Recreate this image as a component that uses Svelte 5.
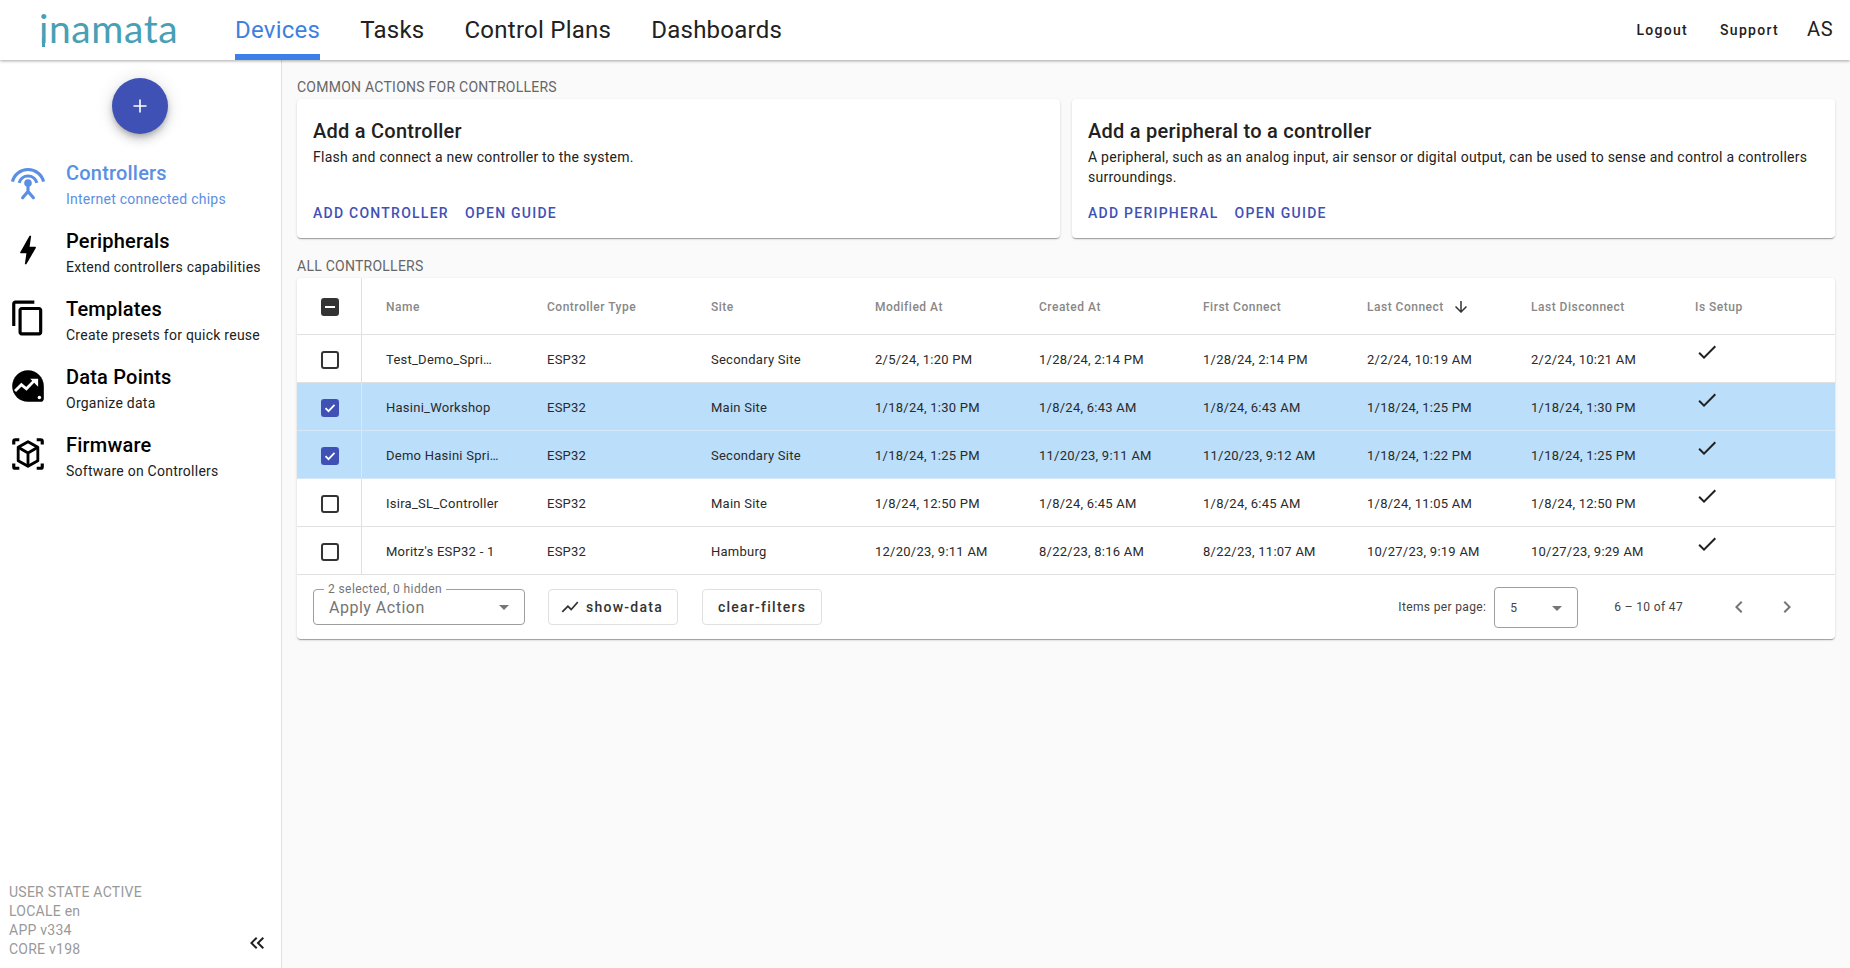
<script lang="ts">
	const tabs = ['Devices', 'Tasks', 'Control Plans', 'Dashboards'];

	const sideItems = [
		{ id: 'controllers', title: 'Controllers', sub: 'Internet connected chips', active: true },
		{ id: 'peripherals', title: 'Peripherals', sub: 'Extend controllers capabilities' },
		{ id: 'templates', title: 'Templates', sub: 'Create presets for quick reuse' },
		{ id: 'datapoints', title: 'Data Points', sub: 'Organize data' },
		{ id: 'firmware', title: 'Firmware', sub: 'Software on Controllers' }
	];

	const columns = ['Name', 'Controller Type', 'Site', 'Modified At', 'Created At', 'First Connect', 'Last Connect', 'Last Disconnect', 'Is Setup'];

	const rows = [
		{ selected: false, cells: ['Test_Demo_Spri…', 'ESP32', 'Secondary Site', '2/5/24, 1:20 PM', '1/28/24, 2:14 PM', '1/28/24, 2:14 PM', '2/2/24, 10:19 AM', '2/2/24, 10:21 AM'] },
		{ selected: true, cells: ['Hasini_Workshop', 'ESP32', 'Main Site', '1/18/24, 1:30 PM', '1/8/24, 6:43 AM', '1/8/24, 6:43 AM', '1/18/24, 1:25 PM', '1/18/24, 1:30 PM'] },
		{ selected: true, cells: ['Demo Hasini Spri…', 'ESP32', 'Secondary Site', '1/18/24, 1:25 PM', '11/20/23, 9:11 AM', '11/20/23, 9:12 AM', '1/18/24, 1:22 PM', '1/18/24, 1:25 PM'] },
		{ selected: false, cells: ['Isira_SL_Controller', 'ESP32', 'Main Site', '1/8/24, 12:50 PM', '1/8/24, 6:45 AM', '1/8/24, 6:45 AM', '1/8/24, 11:05 AM', '1/8/24, 12:50 PM'] },
		{ selected: false, cells: ["Moritz's ESP32 - 1", 'ESP32', 'Hamburg', '12/20/23, 9:11 AM', '8/22/23, 8:16 AM', '8/22/23, 11:07 AM', '10/27/23, 9:19 AM', '10/27/23, 9:29 AM'] }
	];
</script>

<div class="page">
	<header class="topbar">
		<div class="logo-wrap"><span class="logo">inamata</span></div>
		<nav class="tabs">
			{#each tabs as tab, i}
				<a class="tab" class:active={i === 0} href="#top">{tab}</a>
			{/each}
		</nav>
		<div class="top-actions">
			<span class="top-btn">Logout</span>
			<span class="top-btn">Support</span>
			<span class="avatar">AS</span>
		</div>
	</header>

	<div class="body">
		<aside class="sidebar">
			<div class="fab-wrap">
				<button class="fab" aria-label="Add">
					<svg width="16" height="16" viewBox="0 0 16 16"><path d="M8 1.5v13M1.5 8h13" stroke="#fff" stroke-width="1.6" fill="none" /></svg>
				</button>
			</div>

			<ul class="side-list">
				{#each sideItems as item}
					<li class="side-item" class:active={item.active}>
						<svg class="side-icon" width="38" height="38" viewBox="0 0 24 24" fill="currentColor">
							{#if item.id === 'controllers'}
								<g fill="none" stroke="currentColor" stroke-width="2">
									<path d="M2.200 11.800a10 9.600 0 0 1 19.600 0" />
									<path d="M6.400 12.500a5.800 5.800 0 0 1 11.200 0" />
									<path d="M12 13v5M8.600 22l3.400-4 3.400 4" stroke-linecap="round" />
								</g>
								<circle cx="12" cy="12.600" r="2.400" />
							{:else if item.id === 'peripherals'}
								<path d="M11 21h-1l1-7H7.500c-.88 0-.33-.75-.31-.78C8.480 10.940 10.420 7.540 13.010 3h1l-1 7h3.510c.4 0 .62.19.4.66C12.970 17.550 11 21 11 21z" />
							{:else if item.id === 'templates'}
								<path d="M16 1H4c-1.100 0-2 .9-2 2v14h2V3h12V1zm3 4H8c-1.100 0-2 .9-2 2v14c0 1.100.9 2 2 2h11c1.100 0 2-.9 2-2V7c0-1.100-.9-2-2-2zm0 16H8V7h11v14z" />
							{:else if item.id === 'datapoints'}
								<path d="M12 2C6.480 2 2 6.480 2 12s4.480 10 10 10h8c1.100 0 2-.9 2-2v-8c0-5.520-4.480-10-10-10z" />
								<path d="M3.800 15.200l4-4 3.200 2.600 5-5.200" fill="none" stroke="#fff" stroke-width="1.800" />
								<path d="M13.400 7.400h5v5z" fill="#fff" />
								<circle cx="19.200" cy="19.200" r="1.100" fill="#fff" />
							{:else}
								<g fill="none" stroke="currentColor" stroke-width="2" stroke-linejoin="round">
									<path d="M3 6V4a1 1 0 0 1 1-1h2.500M17.500 3H20a1 1 0 0 1 1 1v2M21 18v2a1 1 0 0 1-1 1h-2.500M6.500 21H4a1 1 0 0 1-1-1v-2" />
									<path d="M12 4.200l6.200 3.600v8.400L12 19.800l-6.200-3.600V7.800z" stroke-width="1.800" />
									<path d="M5.800 7.800L12 11.400l6.200-3.600M12 11.400v8.400" stroke-width="1.800" />
								</g>
							{/if}
						</svg>
						<div class="side-text">
							<div class="side-title">{item.title}</div>
							<div class="side-sub">{item.sub}</div>
						</div>
					</li>
				{/each}
			</ul>

			<div class="side-footer">
				<div class="versions">
					<div>USER STATE ACTIVE</div>
					<div>LOCALE en</div>
					<div>APP v334</div>
					<div>CORE v198</div>
				</div>
				<svg class="collapse" width="24" height="24" viewBox="0 0 24 24" fill="#212121">
					<path d="M17.590 18L19 16.590 14.420 12 19 7.410 17.590 6l-6 6zM11 18l1.410-1.410L7.830 12l4.580-4.590L11 6l-6 6z" />
				</svg>
			</div>
		</aside>

		<main class="content">
			<div class="section-label first">COMMON ACTIONS FOR CONTROLLERS</div>
			<div class="cards">
				<section class="card">
					<h2>Add a Controller</h2>
					<p>Flash and connect a new controller to the system.</p>
					<div class="card-actions">
						<span class="link">ADD CONTROLLER</span>
						<span class="link">OPEN GUIDE</span>
					</div>
				</section>
				<section class="card">
					<h2>Add a peripheral to a controller</h2>
					<p>A peripheral, such as an analog input, air sensor or digital output, can be used to sense and control a controllers surroundings.</p>
					<div class="card-actions">
						<span class="link">ADD PERIPHERAL</span>
						<span class="link">OPEN GUIDE</span>
					</div>
				</section>
			</div>

			<div class="section-label">ALL CONTROLLERS</div>
			<div class="table-card">
				<table>
					<thead>
						<tr>
							<th class="select-cell"><span class="box indeterminate"><i></i></span></th>
							{#each columns as col, i}
								<th class:name-cell={i === 0}>
									<span class="th-inner">
										{col}
										{#if col === 'Last Connect'}
											<svg class="sort" width="18" height="18" viewBox="0 0 24 24" fill="#333"><path d="M20 12l-1.410-1.410L13 16.170V4h-2v12.170l-5.580-5.590L4 12l8 8 8-8z" /></svg>
										{/if}
									</span>
								</th>
							{/each}
						</tr>
					</thead>
					<tbody>
						{#each rows as row}
							<tr class:selected={row.selected}>
								<td class="select-cell">
									<span class="box" class:checked={row.selected}>
										{#if row.selected}
											<svg width="14" height="14" viewBox="0 0 14 14"><path d="M2.500 7.200l3 3 6-6.400" fill="none" stroke="#fff" stroke-width="1.700" /></svg>
										{/if}
									</span>
								</td>
								{#each row.cells as cell, i}
									<td class:name-cell={i === 0}>{cell}</td>
								{/each}
								<td>
									<svg class="setup-check" width="24" height="24" viewBox="0 0 24 24" fill="#212121"><path d="M9 16.170L4.830 12l-1.420 1.410L9 19 21 7l-1.410-1.410z" /></svg>
								</td>
							</tr>
						{/each}
					</tbody>
				</table>

				<div class="table-footer">
					<div class="action-select">
						<span class="float-label">2 selected, 0 hidden</span>
						<span class="placeholder">Apply Action</span>
						<span class="caret"></span>
					</div>
					<button class="outline-btn chart-btn">
						<svg width="20" height="20" viewBox="0 0 24 24" fill="#333"><path d="M3.500 18.490l6-6.010 4 4L22 6.920l-1.410-1.410-7.090 7.970-4-4L2 16.990z" /></svg>
						show-data
					</button>
					<button class="outline-btn">clear-filters</button>

					<div class="paginator">
						<span class="per-page">Items per page:</span>
						<div class="page-select">
							<span>5</span>
							<span class="caret"></span>
						</div>
						<span class="range">6 – 10 of 47</span>
						<svg class="pager-icon prev" width="24" height="24" viewBox="0 0 24 24" fill="#757575"><path d="M15.410 7.410L14 6l-6 6 6 6 1.410-1.410L10.830 12z" /></svg>
						<svg class="pager-icon" width="24" height="24" viewBox="0 0 24 24" fill="#757575"><path d="M8.590 16.590L10 18l6-6-6-6-1.410 1.410L13.170 12z" /></svg>
					</div>
				</div>
			</div>
		</main>
	</div>
</div>

<style>
	:global(body) {
		margin: 0;
		font-family: Roboto, 'Liberation Sans', sans-serif;
		color: #212121;
	}

	.page {
		display: flex;
		flex-direction: column;
		height: 968px;
		overflow: hidden;
		background: #fafafa;
	}

	/* top bar */
	.topbar {
		display: flex;
		align-items: stretch;
		height: 60px;
		flex-shrink: 0;
		background: #fff;
		box-shadow: 0 1px 3px rgba(0, 0, 0, 0.35);
		position: relative;
		z-index: 2;
	}

	.logo-wrap {
		width: 196px;
		padding-left: 39px;
	}

	.logo {
		position: relative;
		display: inline-block;
		font-family: Lato, sans-serif;
		font-weight: 400;
		font-size: 39px;
		line-height: 56px;
		letter-spacing: 0.6px;
		color: #47a0b5;
	}

	/* the brand's first letter drops below the baseline */
	.logo::after {
		content: '';
		position: absolute;
		left: 3px;
		top: 38px;
		width: 3px;
		height: 9px;
		background: #47a0b5;
	}

	.tabs {
		display: flex;
		gap: 40px;
	}

	.tab {
		display: flex;
		align-items: center;
		height: 60px;
		box-sizing: border-box;
		padding-top: 6px;
		font-size: 24px;
		letter-spacing: 0.25px;
		color: #212121;
		text-decoration: none;
		border-bottom: 6px solid transparent;
		border-radius: 6px 6px 0 0;
	}

	.tab.active {
		color: #3f7fe0;
		border-bottom-color: #3b7fe8;
	}

	.top-actions {
		margin-left: auto;
		display: flex;
		align-items: center;
		padding-right: 17px;
	}

	.top-btn {
		font-size: 14px;
		font-weight: 500;
		letter-spacing: 1.3px;
		margin-right: 32px;
	}

	.avatar {
		font-size: 20px;
		letter-spacing: 0.5px;
		margin-left: -4px;
		padding-bottom: 2px;
	}

	.body {
		flex: 1;
		display: flex;
		min-height: 0;
	}

	/* sidebar */
	.sidebar {
		width: 281px;
		flex-shrink: 0;
		display: flex;
		flex-direction: column;
		background: #fff;
		border-right: 1px solid #e0e0e0;
	}

	.fab-wrap {
		display: flex;
		justify-content: center;
		padding-top: 18px;
	}

	.fab {
		width: 56px;
		height: 56px;
		margin-right: 1px;
		border: none;
		border-radius: 50%;
		background: #3f51b5;
		display: flex;
		align-items: center;
		justify-content: center;
		box-shadow: 0 3px 5px -1px rgba(0, 0, 0, 0.2), 0 6px 10px 0 rgba(0, 0, 0, 0.14), 0 1px 18px 0 rgba(0, 0, 0, 0.12);
	}

	.side-list {
		list-style: none;
		margin: 18px 0 0;
		padding: 0;
	}

	.side-item {
		display: flex;
		align-items: center;
		height: 68px;
		padding-left: 9px;
		color: #000;
	}

	.side-item.active {
		color: #5b8fe3;
	}

	.side-icon {
		flex-shrink: 0;
		margin: 0 19px 8px 0;
	}

	.side-title {
		font-size: 20px;
		font-weight: 500;
		line-height: 26px;
		letter-spacing: 0.2px;
	}

	.side-sub {
		font-size: 14px;
		line-height: 26px;
		letter-spacing: 0.25px;
		color: #212121;
	}

	.side-item.active .side-sub {
		color: #5b8fe3;
	}

	.side-footer {
		margin-top: auto;
		display: flex;
		align-items: flex-end;
		justify-content: space-between;
		padding: 0 12px 9px 9px;
	}

	.versions {
		font-size: 14px;
		line-height: 19px;
		letter-spacing: 0.25px;
		color: #999;
	}

	.collapse {
		margin-bottom: 4px;
	}

	/* main area */
	.content {
		flex: 1;
		min-width: 0;
		padding: 0 15px;
	}

	.section-label {
		font-size: 14px;
		line-height: 20px;
		letter-spacing: 0.25px;
		color: #666;
		margin: 18px 0 2px;
	}

	.section-label.first {
		margin-top: 17px;
	}

	.cards {
		display: grid;
		grid-template-columns: 1fr 1fr;
		gap: 12px;
	}

	.card {
		display: flex;
		flex-direction: column;
		height: 139px;
		box-sizing: border-box;
		padding: 20px 16px 12px;
		background: #fff;
		border-radius: 4px;
		box-shadow: 0 2px 1px -1px rgba(0, 0, 0, 0.2), 0 1px 1px 0 rgba(0, 0, 0, 0.14), 0 1px 3px 0 rgba(0, 0, 0, 0.12);
	}

	.card h2 {
		margin: 0 0 4px;
		font-size: 20px;
		font-weight: 500;
		line-height: 24px;
		letter-spacing: 0.25px;
		color: #212121;
	}

	.card p {
		margin: 0;
		font-size: 14px;
		line-height: 20px;
		letter-spacing: 0.25px;
	}

	.card-actions {
		margin-top: auto;
		display: flex;
		gap: 16px;
		height: 20px;
		margin-bottom: 3px;
	}

	.link {
		font-size: 14px;
		font-weight: 500;
		line-height: 20px;
		letter-spacing: 1.25px;
		color: #3f51b5;
	}

	/* table */
	.table-card {
		background: #fff;
		border-radius: 4px;
		box-shadow: 0 2px 1px -1px rgba(0, 0, 0, 0.2), 0 1px 1px 0 rgba(0, 0, 0, 0.14), 0 1px 3px 0 rgba(0, 0, 0, 0.12);
	}

	table {
		width: 100%;
		border-collapse: separate;
		border-spacing: 0;
		table-layout: fixed;
	}

	th,
	td {
		width: 164px;
		padding: 0;
		box-sizing: border-box;
		text-align: left;
		border-bottom: 1px solid #e0e0e0;
		white-space: nowrap;
		vertical-align: middle;
	}

	th {
		height: 57px;
		padding-top: 1px;
		font-size: 12px;
		font-weight: 500;
		letter-spacing: 0.5px;
		color: #888;
	}

	td {
		height: 48px;
		padding-top: 2px;
		font-size: 13px;
		letter-spacing: 0.25px;
		color: #2a2a2a;
	}

	th:last-child,
	td:last-child {
		width: auto;
	}

	.select-cell {
		width: 65px;
		padding-left: 2px;
		text-align: center;
		border-right: 1px solid #e0e0e0;
	}

	.name-cell {
		width: 185px;
		padding-left: 24px;
	}

	.th-inner {
		display: inline-flex;
		align-items: center;
	}

	.sort {
		margin-left: 8px;
	}

	tr.selected td {
		background: #bbdefb;
		border-bottom-color: #d4e8f9;
	}

	tr.selected .select-cell {
		border-right-color: #d4e8f9;
	}

	.box {
		display: inline-flex;
		align-items: center;
		justify-content: center;
		width: 18px;
		height: 18px;
		box-sizing: border-box;
		border: 2px solid #333;
		border-radius: 3px;
		vertical-align: middle;
	}

	.box.checked {
		background: #3f51b5;
		border-color: #3f51b5;
	}

	.box.indeterminate {
		background: #333;
	}

	.box.indeterminate i {
		display: block;
		width: 10px;
		height: 2px;
		background: #fff;
	}

	.setup-check {
		display: block;
		margin-bottom: 16px;
	}

	/* footer of the table */
	.table-footer {
		display: flex;
		align-items: center;
		height: 64px;
		padding-left: 16px;
	}

	.action-select {
		position: relative;
		display: flex;
		align-items: center;
		justify-content: space-between;
		width: 212px;
		height: 36px;
		box-sizing: border-box;
		padding: 0 15px;
		border: 1px solid #9e9e9e;
		border-radius: 4px;
		margin-right: 23px;
	}

	.float-label {
		position: absolute;
		top: -8px;
		left: 10px;
		padding: 0 4px;
		background: #fff;
		font-size: 12px;
		line-height: 14px;
		letter-spacing: 0.4px;
		color: #757575;
	}

	.placeholder {
		font-size: 16px;
		letter-spacing: 0.5px;
		color: #757575;
		padding-top: 1px;
	}

	.caret {
		width: 0;
		height: 0;
		border-left: 5px solid transparent;
		border-right: 5px solid transparent;
		border-top: 5px solid #757575;
	}

	.outline-btn {
		display: flex;
		align-items: center;
		gap: 6px;
		height: 36px;
		padding: 0 15px;
		background: #fff;
		border: 1px solid #e0e0e0;
		border-radius: 4px;
		font-family: inherit;
		font-size: 14px;
		font-weight: 500;
		letter-spacing: 1.25px;
		color: #333;
	}

	.chart-btn {
		padding: 0 14px 0 11px;
		margin-right: 24px;
	}

	.paginator {
		margin-left: auto;
		display: flex;
		align-items: center;
		font-size: 12px;
		letter-spacing: 0.35px;
		color: #424242;
		padding-right: 36px;
	}

	.per-page {
		margin-right: 8px;
	}

	.page-select {
		display: flex;
		align-items: center;
		justify-content: space-between;
		width: 84px;
		height: 41px;
		box-sizing: border-box;
		padding: 2px 15px 0 15px;
		border: 1px solid #9e9e9e;
		border-radius: 4px;
		margin-right: 36px;
	}

	.range {
		margin-right: 44px;
	}

	.pager-icon.prev {
		margin-right: 24px;
	}
</style>
